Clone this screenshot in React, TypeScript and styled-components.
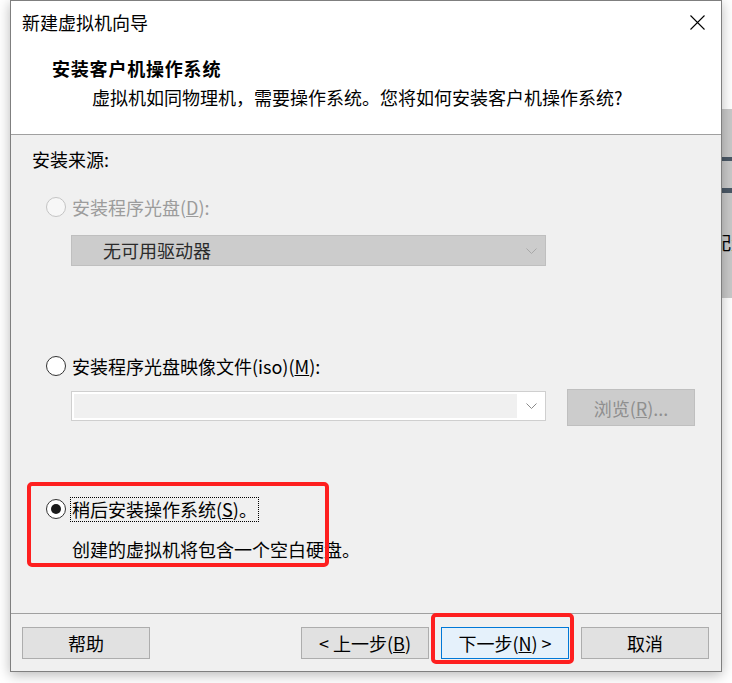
import React from "react";
import styled, { createGlobalStyle } from "styled-components";

const GlobalStyle = createGlobalStyle`
  html, body {
    margin: 0;
    padding: 0;
    background: #ffffff;
  }
  body {
    font-family: "Noto Sans CJK SC", "Noto Sans", sans-serif;
    font-size: 18px;
    color: #000;
  }
`;

const Desktop = styled.div`
  display: flex;
  align-items: flex-start;
  padding-left: 10px;
  height: 683px;
  overflow: hidden;
`;

const Window = styled.div`
  width: 712px;
  height: 672px;
  box-sizing: border-box;
  display: flex;
  flex-direction: column;
  border: 1px solid #7f7f7f;
  background: #f0f0f0;
  box-shadow: 0 3px 12px rgba(0, 0, 0, 0.28);
  position: relative;
  z-index: 1;
`;

const Header = styled.div`
  background: #ffffff;
  height: 134px;
  box-sizing: border-box;
  border-bottom: 1px solid #a0a0a0;
`;

const TitleBar = styled.div`
  display: flex;
  align-items: center;
  height: 42px;
  padding-left: 11px;
`;

const TitleText = styled.span`
  line-height: 24px;
`;

const CloseButton = styled.div`
  margin-left: auto;
  margin-right: 1px;
  width: 46px;
  height: 42px;
  display: flex;
  align-items: center;
  justify-content: center;
`;

const PageHeading = styled.div`
  margin-top: 13px;
  padding-left: 41px;
  line-height: 24px;
  font-weight: 700;
  letter-spacing: 0.8px;
`;

const PageSubtitle = styled.div`
  margin-top: 5px;
  padding-left: 81px;
  line-height: 24px;
`;

const Body = styled.div`
  flex: 1;
  padding: 12px 0 0 21px;
`;

const SectionLabel = styled.div`
  line-height: 24px;
`;

const OptionRow = styled.div<{ $gap: number }>`
  display: flex;
  align-items: center;
  height: 24px;
  margin-top: ${(p) => p.$gap}px;
  margin-left: 14px;
  gap: 4px;
`;

const Radio = styled.span<{ $checked?: boolean; $disabled?: boolean }>`
  width: 20px;
  height: 20px;
  box-sizing: border-box;
  border-radius: 50%;
  flex-shrink: 0;
  border: 1.5px solid ${(p) => (p.$disabled ? "#c4c4c4" : "#333333")};
  background: ${(p) => (p.$disabled ? "#f7f7f7" : "#ffffff")};
  display: flex;
  align-items: center;
  justify-content: center;

  &::after {
    content: "";
    display: ${(p) => (p.$checked ? "block" : "none")};
    width: 10px;
    height: 10px;
    border-radius: 50%;
    background: #1a1a1a;
  }
`;

const OptionLabel = styled.span<{ $disabled?: boolean; $focused?: boolean }>`
  line-height: 23px;
  padding: 0 1px;
  border: 1px dotted ${(p) => (p.$focused ? "#000" : "transparent")};
  color: ${(p) => (p.$disabled ? "#9c9c9c" : "#000")};
`;

const Combo = styled.div<{ $disabled?: boolean; $gap: number }>`
  display: flex;
  align-items: stretch;
  width: 475px;
  height: ${(p) => (p.$disabled ? 31 : 30)}px;
  box-sizing: border-box;
  margin-top: ${(p) => p.$gap}px;
  margin-left: ${(p) => (p.$disabled ? 39 : 0)}px;
  border: 1px solid ${(p) => (p.$disabled ? "#bfbfbf" : "#cfcfcf")};
  background: ${(p) => (p.$disabled ? "#cccccc" : "#ffffff")};
  padding: ${(p) => (p.$disabled ? 0 : "2px 0 2px 2px")};
`;

const ComboValue = styled.div<{ $disabled?: boolean }>`
  flex: 1;
  padding-left: 31px;
  line-height: 28px;
  color: #2b2b2b;
  background: ${(p) => (p.$disabled ? "transparent" : "#f0f0f0")};
`;

const ComboArrow = styled.div`
  width: 28px;
  display: flex;
  align-items: center;
  justify-content: center;
`;

const FileRow = styled.div`
  display: flex;
  align-items: flex-start;
  margin-top: 11px;
  margin-left: 39px;
`;

const BrowseButton = styled.div`
  width: 128px;
  height: 37px;
  box-sizing: border-box;
  margin-left: 21px;
  border: 1px solid #bfbfbf;
  background: #cccccc;
  color: #8f8f8f;
  display: flex;
  align-items: center;
  justify-content: center;
`;

const HighlightGroup = styled.div`
  position: relative;
  margin-top: 71px;
  margin-left: 14px;
  width: 290px;

  ${OptionRow} {
    margin-left: 0;
  }
`;

const Hint = styled.div`
  margin-top: 16px;
  margin-left: 26px;
  line-height: 24px;
  white-space: nowrap;
`;

const Annotation = styled.span`
  position: absolute;
  box-sizing: border-box;
  border: 4px solid #fe1f1f;
  border-radius: 5px;
  pointer-events: none;
`;

const OptionAnnotation = styled(Annotation)`
  left: -19px;
  top: -15px;
  width: 302px;
  height: 85px;
`;

const ButtonAnnotation = styled(Annotation)`
  left: -10px;
  top: -14px;
  right: -5px;
  bottom: -5px;
`;

const Footer = styled.div`
  display: flex;
  align-items: center;
  border-top: 1px solid #a0a0a0;
  padding: 13px 12px 12px 11px;
`;

const FooterGroup = styled.div`
  display: flex;
  gap: 12px;
  margin-left: auto;
`;

const ButtonWrap = styled.div`
  position: relative;
`;

const Button = styled.div<{ $primary?: boolean }>`
  width: 128px;
  height: 32px;
  box-sizing: border-box;
  display: flex;
  align-items: center;
  justify-content: center;
  border: 1px solid ${(p) => (p.$primary ? "#0078d7" : "#adadad")};
  background: ${(p) => (p.$primary ? "#e5f1fb" : "#e1e1e1")};
  line-height: 24px;
`;

const BackWindow = styled.div`
  width: 10px;
  height: 189px;
  margin-top: 109px;
  background: #c9c9c9;
  overflow: hidden;
  display: flex;
  flex-direction: column;
`;

const BackBar = styled.div<{ $gap: number; $h: number }>`
  margin-top: ${(p) => p.$gap}px;
  height: ${(p) => p.$h}px;
  background: #4a5866;
`;

const BackText = styled.div`
  margin-top: 37px;
  margin-left: -9px;
  line-height: 24px;
  white-space: nowrap;
`;

const Chevron = ({ color }: { color: string }) => (
  <svg width="11" height="6" viewBox="0 0 11 6">
    <polyline points="0.5,0.5 5.5,5.5 10.5,0.5" fill="none" stroke={color} strokeWidth="1" />
  </svg>
);

const CloseIcon = () => (
  <svg width="15" height="15" viewBox="0 0 15 15">
    <path d="M0.5 0.5 L14.5 14.5 M14.5 0.5 L0.5 14.5" stroke="#000" strokeWidth="1.1" fill="none" />
  </svg>
);

const App = () => {
  return (
    <>
      <GlobalStyle />
      <Desktop>
        <Window>
          <Header>
            <TitleBar>
              <TitleText>新建虚拟机向导</TitleText>
              <CloseButton>
                <CloseIcon />
              </CloseButton>
            </TitleBar>
            <PageHeading>安装客户机操作系统</PageHeading>
            <PageSubtitle>虚拟机如同物理机，需要操作系统。您将如何安装客户机操作系统?</PageSubtitle>
          </Header>

          <Body>
            <SectionLabel>安装来源:</SectionLabel>

            <OptionRow $gap={24}>
              <Radio $disabled />
              <OptionLabel $disabled>
                安装程序光盘(<u>D</u>):
              </OptionLabel>
            </OptionRow>
            <Combo $disabled $gap={16}>
              <ComboValue $disabled>无可用驱动器</ComboValue>
              <ComboArrow>
                <Chevron color="#a8a8a8" />
              </ComboArrow>
            </Combo>

            <OptionRow $gap={88}>
              <Radio />
              <OptionLabel>
                安装程序光盘映像文件(iso)(<u>M</u>):
              </OptionLabel>
            </OptionRow>
            <FileRow>
              <Combo $gap={2}>
                <ComboValue />
                <ComboArrow>
                  <Chevron color="#8a8a8a" />
                </ComboArrow>
              </Combo>
              <BrowseButton>
                浏览(<u>R</u>)...
              </BrowseButton>
            </FileRow>

            <HighlightGroup>
              <OptionRow $gap={0}>
                <Radio $checked />
                <OptionLabel $focused>
                  稍后安装操作系统(<u>S</u>)。
                </OptionLabel>
              </OptionRow>
              <Hint>创建的虚拟机将包含一个空白硬盘。</Hint>
              <OptionAnnotation />
            </HighlightGroup>
          </Body>

          <Footer>
            <Button>帮助</Button>
            <FooterGroup>
              <Button>
                &lt; 上一步(<u>B</u>)
              </Button>
              <ButtonWrap>
                <Button $primary>
                  下一步(<u>N</u>) &gt;
                </Button>
                <ButtonAnnotation />
              </ButtonWrap>
              <Button>取消</Button>
            </FooterGroup>
          </Footer>
        </Window>

        <BackWindow>
          <BackBar $gap={48} $h={4} />
          <BackBar $gap={27} $h={5} />
          <BackText>配置</BackText>
        </BackWindow>
      </Desktop>
    </>
  );
};

export default App;
